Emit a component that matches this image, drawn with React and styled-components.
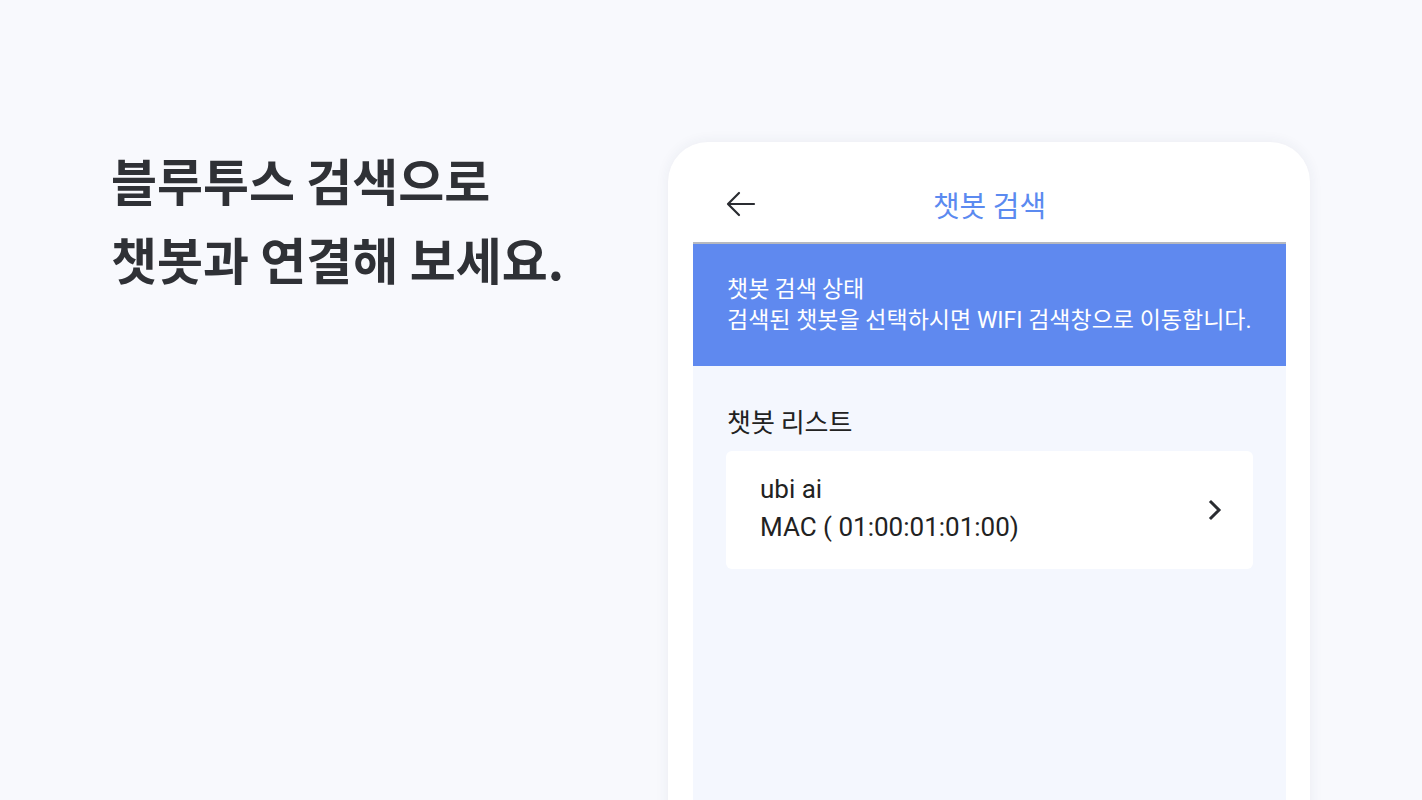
import React from 'react';
import styled, { createGlobalStyle } from 'styled-components';

const GlobalStyle = createGlobalStyle`
  html, body {
    margin: 0;
    padding: 0;
    background: #f8f9fd;
    font-family: Roboto, "Noto Sans CJK KR", sans-serif;
    overflow: hidden;
  }
`;

const Page = styled.div`
  width: 1422px;
  height: 800px;
  display: flex;
  align-items: flex-start;
  overflow: hidden;
`;

const Intro = styled.div`
  width: 668px;
  flex-shrink: 0;
  padding: 140px 0 0 111px;
  box-sizing: border-box;
`;

const Headline = styled.h1`
  margin: 0;
  font-family: "Noto Sans CJK KR", sans-serif;
  font-size: 50px;
  font-weight: 700;
  line-height: 79px;
  color: #2f3136;
`;

const Phone = styled.div`
  margin-top: 142px;
  width: 642px;
  height: 720px;
  flex-shrink: 0;
  background: #fff;
  border-radius: 40px 40px 0 0;
  box-shadow: 0 0 14px rgba(40, 50, 80, 0.07);
  padding: 0 24px 0 25px;
  box-sizing: border-box;
  display: flex;
  flex-direction: column;
`;

const Header = styled.div`
  height: 100px;
  display: grid;
  grid-template-columns: 80px 1fr 80px;
  align-items: center;
  padding-top: 24px;
  box-sizing: border-box;
`;

const BackButton = styled.button`
  border: 0;
  background: none;
  padding: 0 0 0 33px;
  display: flex;
  align-items: center;
  cursor: pointer;
`;

const Title = styled.div`
  text-align: center;
  font-family: "Noto Sans CJK KR", sans-serif;
  font-size: 29px;
  color: #5b8af0;
`;

const Screen = styled.div`
  flex: 1;
  background: #f4f7fe;
  border-top: 2px solid #b6b9c0;
`;

const Banner = styled.div`
  background: #5f89ef;
  height: 122px;
  padding: 26px 0 0 34px;
  box-sizing: border-box;
  color: #fff;
  font-size: 23px;
  line-height: 34px;
`;

const BannerLine = styled.div`
  font-family: ${p => (p.latin ? 'Roboto, "Noto Sans CJK KR", sans-serif' : '"Noto Sans CJK KR", sans-serif')};
`;

const ListSection = styled.div`
  padding: 37px 33px 0 33px;
`;

const ListTitle = styled.div`
  font-family: "Noto Sans CJK KR", sans-serif;
  font-size: 26px;
  line-height: 36px;
  color: #222;
  padding-left: 1px;
  margin-bottom: 12px;
`;

const DeviceCard = styled.div`
  background: #fff;
  border-radius: 6px;
  height: 118px;
  padding: 19px 30px 0 34px;
  box-sizing: border-box;
  display: flex;
  align-items: flex-start;
  justify-content: space-between;
`;

const DeviceInfo = styled.div`
  font-size: 26px;
  line-height: 38px;
  color: #222;
`;

const Chevron = styled.div`
  align-self: center;
  margin-top: -20px;
  display: flex;
`;

export default function App() {
  return (
    <>
      <GlobalStyle />
      <Page>
        <Intro>
          <Headline>
            블루투스 검색으로
            <br />
            챗봇과 연결해 보세요.
          </Headline>
        </Intro>
        <Phone>
          <Header>
            <BackButton aria-label="back">
              <svg width="30" height="26" viewBox="0 0 30 26" fill="none">
                <path d="M28 13H3M13 2L2 13l11 11" stroke="#2a2c31" strokeWidth="2.2" strokeLinecap="round" strokeLinejoin="round" />
              </svg>
            </BackButton>
            <Title>챗봇 검색</Title>
            <div />
          </Header>
          <Screen>
            <Banner>
              <BannerLine>챗봇 검색 상태</BannerLine>
              <BannerLine latin>검색된 챗봇을 선택하시면 WIFI 검색창으로 이동합니다.</BannerLine>
            </Banner>
            <ListSection>
              <ListTitle>챗봇 리스트</ListTitle>
              <DeviceCard>
                <DeviceInfo>
                  <div>ubi ai</div>
                  <div>MAC ( 01:00:01:01:00)</div>
                </DeviceInfo>
                <Chevron>
                  <svg width="16" height="22" viewBox="0 0 16 22" fill="none">
                    <path d="M4 3l8 8-8 8" stroke="#2a2c31" strokeWidth="3" strokeLinecap="square" strokeLinejoin="miter" />
                  </svg>
                </Chevron>
              </DeviceCard>
            </ListSection>
          </Screen>
        </Phone>
      </Page>
    </>
  );
}
